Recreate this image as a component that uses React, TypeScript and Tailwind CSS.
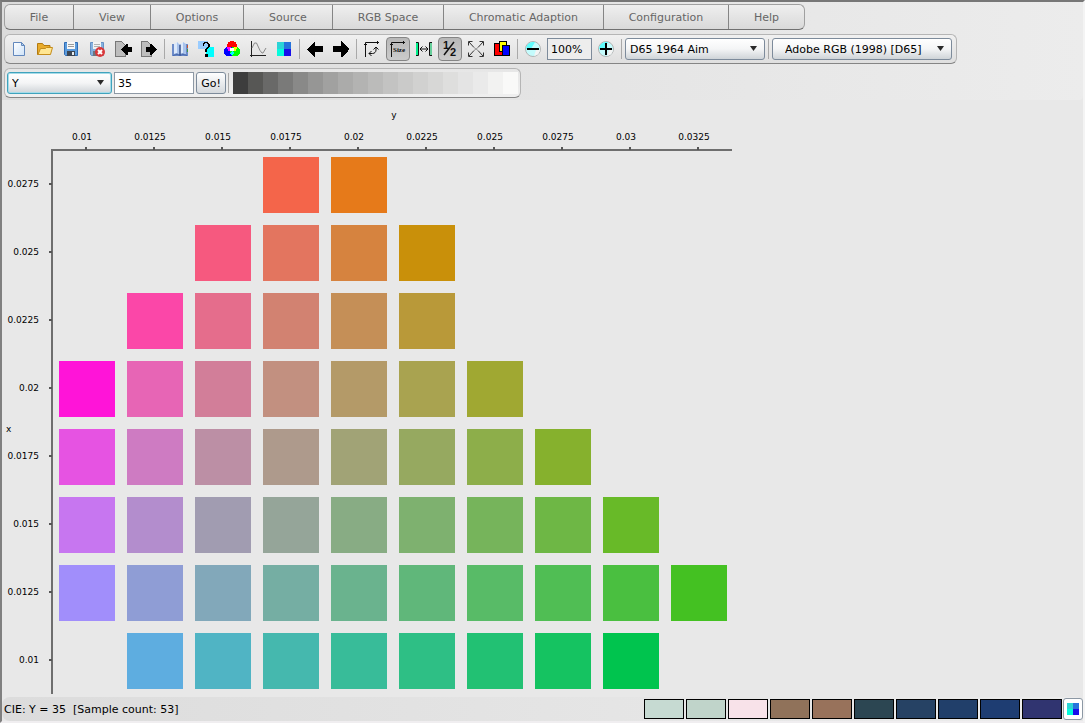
import type { ReactNode } from "react";
import clsx from "clsx";

const menus = [
  { label: "File", width: "w-[69px]" },
  { label: "View", width: "w-[77px]" },
  { label: "Options", width: "w-[93px]" },
  { label: "Source", width: "w-[89px]" },
  { label: "RGB Space", width: "w-[111px]" },
  { label: "Chromatic Adaption", width: "w-[160px]" },
  { label: "Configuration", width: "w-[125px]" },
  { label: "Help", width: "w-[75px]" },
];

const greys = [
  "#3d3d3d", "#575755", "#696968", "#7a7a79", "#898988", "#969695", "#a1a1a0",
  "#ababaa", "#b3b3b2", "#bbbbba", "#c3c3c2", "#cacac9", "#d1d1d0", "#d7d7d6",
  "#dededd", "#e4e4e4", "#eaeaea", "#f2f2f1", "#f9f9f8",
];

const recent = [
  "#c6dad2", "#c0d4ca", "#f8e2e9", "#90725a", "#98725b",
  "#2c4652", "#264264", "#213f6a", "#1e3d72", "#303470",
];

const yValues = ["0.01", "0.0125", "0.015", "0.0175", "0.02", "0.0225", "0.025", "0.0275", "0.03", "0.0325"];

// one row per x value, start = first filled column
const rows = [
  { x: "0.0275", start: 3, colors: ["#f4654a", "#e67a1a"] },
  { x: "0.025", start: 2, colors: ["#f6597f", "#e3755f", "#d6833f", "#c9900a"] },
  { x: "0.0225", start: 1, colors: ["#fb47a8", "#e56d8c", "#d28271", "#c58f57", "#b99939"] },
  { x: "0.02", start: 0, colors: ["#ff14d8", "#e765b5", "#d27e99", "#c29080", "#b49a68", "#a9a350", "#a0a832"] },
  { x: "0.0175", start: 0, colors: ["#e653e2", "#ce7bc2", "#bc8fa5", "#ae9a8c", "#a1a376", "#96a960", "#8dae4a", "#86b12d"] },
  { x: "0.015", start: 0, colors: ["#c776f0", "#b38dcd", "#a19cb1", "#95a599", "#88ac84", "#7eb16f", "#76b45b", "#6eb745", "#68ba28"] },
  { x: "0.0125", start: 0, colors: ["#a18efb", "#8f9dd5", "#82a8ba", "#75aea3", "#6ab38e", "#60b77a", "#58bb67", "#50be54", "#4abf40", "#44c122"] },
  { x: "0.01", start: 1, colors: ["#5eade0", "#50b4c4", "#45b8ae", "#38bc99", "#2ebf85", "#22c173", "#15c361", "#00c44e"] },
];

const CELL = 56;
const PITCH = 68;

function Icon({ children, crisp }: { children: ReactNode; crisp?: boolean }) {
  return (
    <svg
      width="16"
      height="16"
      viewBox="0 0 16 16"
      fill="none"
      aria-hidden="true"
      className="shrink-0 overflow-visible"
      shapeRendering={crisp ? "crispEdges" : undefined}
    >
      {children}
    </svg>
  );
}

function Quad() {
  return (
    <>
      <path fill="#2bd3d6" d="M1 1h7v7H1z" />
      <path fill="#2573dc" d="M8 1h7v7H8z" />
      <path fill="#06fbdc" d="M1 8h7v7H1z" />
      <path fill="#1910ea" d="M8 8h7v7H8z" />
    </>
  );
}

function Floppy() {
  return (
    <>
      <path fill="#5b9bdc" stroke="#2f6bb5" d="M1.500 1.500h13v13h-12l-1-1z" />
      <path fill="#f7f7f7" d="M4 1h8v7H4z" />
      <path stroke="#9a9a9a" d="M5 3.500h6M5 5.500h6" />
      <path fill="#3d4652" d="M4 10h8v5H4z" />
      <path fill="#e8edf2" d="M9 11h2v3H9z" />
    </>
  );
}

function ArrowLeft() {
  return <path fill="#000" d="M0 8l1-1 1-1 1-1 1-1 1-1 1-1 2-2v5h8v6H8v5H7l-1-1-1-1-1-1-1-1-1-1-1-1z" />;
}

const fileIcons = [
  {
    name: "New",
    icon: (
      <Icon>
        <defs>
          <linearGradient id="page" x1="0" y1="0" x2="1" y2="1">
            <stop stopColor="#fff" />
            <stop offset="1" stopColor="#cfe3f8" />
          </linearGradient>
        </defs>
        <path fill="url(#page)" stroke="#6288bd" d="M2.500 1.500h8l3 3v10h-11z" />
        <path fill="#b8d2ee" stroke="#6288bd" d="M10.500 1.500v3h3z" />
      </Icon>
    ),
  },
  {
    name: "Open",
    icon: (
      <Icon>
        <path fill="#e9ac2c" stroke="#b37a10" d="M.5 13.500v-11h5l1.500 2h6v9z" />
        <path fill="#ffe692" stroke="#c58d1c" d="M1 13.500l2.500-6h5l1-1h6l-2 7z" />
      </Icon>
    ),
  },
  { name: "Save", icon: <Icon><Floppy /></Icon> },
  {
    name: "Delete",
    icon: (
      <Icon>
        <g opacity=".7"><Floppy /></g>
        <circle cx="11" cy="11" r="5" fill="#d9383b" />
        <path stroke="#fff" strokeWidth="2" d="M9 9l4 4M13 9l-4 4" />
      </Icon>
    ),
  },
  {
    name: "Import",
    icon: (
      <Icon crisp>
        <path fill="#bdbdbd" stroke="#777" d="M.5.5h6l4 4v11H.5z" />
        <path fill="#000" d="M6 8h1V7h1V6h1V5h1V4h1V3h2v3h4v5h-4v3h-2v-1h-1v-1H9v-1H8v-1H7V9H6z" />
      </Icon>
    ),
  },
  {
    name: "Export",
    icon: (
      <Icon crisp>
        <path fill="#bdbdbd" stroke="#777" d="M.5.500h6l4 4v11H.5z" />
        <path fill="#000" d="M16 8h-1V7h-1V6h-1V5h-1V4h-1V3H9v3H5v5h4v3h2v-1h1v-1h1v-1h1v-1h1V9h1z" />
      </Icon>
    ),
  },
];

const viewIcons = [
  {
    name: "Book",
    icon: (
      <Icon>
        <path fill="#6d8cc9" d="M0 3h16v12H0z" />
        <path fill="#dce9fb" d="M2 3l3-2 3 3v9l-3-1-3 1zM14 3l-3-2-3 3v9l3-1 3 1z" />
        <path fill="#a9c3ec" d="M5 1l3 3v9l-3-1zM11 1l3 2v10l-3-1z" />
        <path stroke="#36508c" strokeWidth="1.500" d="M8 4v11" />
        <path stroke="#4869ad" d="M1 14.500l4-1 3 1 3-1 4 1" />
        <path stroke="#c5552f" d="M15.500 4v3" />
        <path stroke="#3f9a44" d="M15.500 8v3" />
      </Icon>
    ),
  },
  {
    name: "Help",
    icon: (
      <Icon crisp>
        <path fill="#99ccff" d="M0 0h10v8H0z" />
        <path fill="#00ffff" d="M8 6h8v10H8z" />
        <path fill="#000" d="M6 1h4v1H6zM5 2h2v1H5zM9 2h2v1H9zM5 3h1v2H5zM10 3h2v3h-2zM9 6h2v1H9zM8 7h2v1H8zM7 8h2v3H7zM7 13h3v3H7z" />
      </Icon>
    ),
  },
  {
    name: "Gamut",
    icon: (
      <Icon crisp>
        <circle cx="8" cy="5" r="5" fill="#ff0000" />
        <circle cx="5" cy="10.500" r="5" fill="#0000ff" />
        <circle cx="11" cy="10.500" r="5" fill="#00ff00" />
        <path fill="#ff00ff" d="M3 6h3l2 2-2 2H4z" />
        <path fill="#ffff00" d="M10 6h3l-1 4h-2L8 8z" />
        <path fill="#00ffff" d="M8 10l2 2-2 3-2-3z" />
        <circle cx="8" cy="8.500" r="2" fill="#fff" />
      </Icon>
    ),
  },
  {
    name: "Curve",
    icon: (
      <Icon>
        <path stroke="#222" d="M1.500 0v16M0 14.500h16" />
        <path stroke="#8a8a8a" d="M2 7l2.500-5h2L10 9.500l2 2.500h1l3-5" />
      </Icon>
    ),
  },
  { name: "Patches", icon: <Icon crisp><Quad /></Icon> },
];

const navIcons = [
  { name: "Back", icon: <Icon crisp><ArrowLeft /></Icon> },
  { name: "Forward", icon: <Icon crisp><g transform="matrix(-1 0 0 1 16 0)"><ArrowLeft /></g></Icon> },
];

const scaleIcons = [
  {
    name: "Swap axes",
    icon: (
      <Icon>
        <path stroke="#111" d="M1.500 16V1.500H15M0 3.500h3M13.500 0v3" />
        <path stroke="#111" d="M5 12.500h3.500c2 0 3.500-1.500 3.500-3.500V6M9.500 8.500L12 6l2.500 2.500M7.500 10L5 12.500 7.500 15" />
      </Icon>
    ),
  },
  {
    name: "Size",
    pressed: true,
    icon: (
      <Icon>
        <path stroke="#111" d="M1.500 16V1.500H15M0 3.500h3M13.500 0v3" />
        <text x="3" y="11" fontSize="7" fontWeight="bold" fontFamily="Liberation Serif, serif" fill="#111">
          Size
        </text>
      </Icon>
    ),
  },
  {
    name: "Spacing",
    icon: (
      <Icon>
        <path fill="#00f28c" d="M0 1h2v14H0z" />
        <path fill="#67cf9b" d="M14 1h2v14h-2z" />
        <path stroke="#111" d="M0 1.500h2.500v13H0M16 1.500h-2.500v13H16M4.500 8h7M6.500 5.500L4 8l2.500 2.500M9.500 5.500L12 8l-2.500 2.500" />
      </Icon>
    ),
  },
  {
    name: "Half size",
    pressed: true,
    icon: (
      <Icon>
        <g fontSize="11" fontWeight="bold" fontFamily="Liberation Sans, sans-serif" fill="#111">
          <text x="1" y="8">1</text>
          <text x="8" y="15">2</text>
        </g>
        <path stroke="#111" strokeWidth="1.500" d="M2 14L12 1" />
      </Icon>
    ),
  },
  {
    name: "Fit",
    icon: (
      <Icon>
        <path stroke="#333" d="M1 1l5 5.500M15 1l-5 5.500M1 15l5-5.500M15 15l-5-5.500" />
        <path stroke="#333" d="M.5 4.500v-4h4M11.500.5h4v4M.5 11.500v4h4M15.500 11.500v4h-4" />
        <path stroke="#999" d="M6 6.500l4 3M10 6.500l-4 3" />
      </Icon>
    ),
  },
  {
    name: "Layers",
    icon: (
      <Icon crisp>
        <path fill="#ff0000" stroke="#000" d="M.5 2.500h8v12h-8z" />
        <path fill="#ffff00" stroke="#000" d="M5.500.5h7v10h-7z" />
        <path fill="#0000ff" stroke="#000" d="M8.500 4.500h7v10h-7z" />
      </Icon>
    ),
  },
];

const disc = (
  <>
    <circle cx="8" cy="8" r="7.500" fill="#c4fbfc" stroke="#b4b4b4" />
    <path fill="#5ffcfd" d="M1 8a7 7 0 0 1 7-7h2L6 8z" />
    <path fill="#f4f4f4" d="M15 9a7 7 0 0 1-6 6l2-6z" />
  </>
);

function ToolButton({ name, icon, pressed }: { name: string; icon: ReactNode; pressed?: boolean }) {
  return (
    <button
      type="button"
      title={name}
      aria-label={name}
      aria-pressed={pressed}
      className={clsx(
        "mx-px flex size-6 shrink-0 items-center justify-center",
        pressed && "rounded-sm border border-[#858585] bg-linear-to-b from-[#b8b8b8] to-[#cbcbcb]"
      )}
    >
      {icon}
    </button>
  );
}

function Separator() {
  return <div className="mx-0.5 h-5 w-px shrink-0 bg-[#a9a9a9]" />;
}

function Select({ label, options, className, active, indent }: { label: string; options: string[]; className: string; active?: boolean; indent?: boolean }) {
  return (
    <div className={clsx("relative shrink-0", className)}>
      <select
        aria-label={label}
        className={clsx(
          "h-[22px] w-full appearance-none rounded-[3px] border bg-linear-to-b from-white via-[#f4f5f6] to-[#cfd4d8] pt-0.5",
          active ? "border-[#3fa3bd] ring-1 ring-[#a6dbe8] ring-inset" : "border-[#7d8b9b]",
          indent ? "pl-3" : "pl-1"
        )}
      >
        {options.map((o) => (
          <option key={o}>{o}</option>
        ))}
      </select>
      <svg className="pointer-events-none absolute top-2 right-2 h-[5px] w-[7px]" viewBox="0 0 7 5" aria-hidden="true">
        <path fill="#2a2a2a" d="M0 0h7L3.500 5z" />
      </svg>
    </div>
  );
}

function Chart() {
  return (
    <svg width="738" height="597" className="block" fontSize="9" shapeRendering="crispEdges" role="img" aria-label="CIE samples">
      <text x="392" y="18" textAnchor="middle">y</text>
      <text x="4" y="332">x</text>
      <path fill="#6e6e6e" d="M49 49h681v2H49zM49 49h2v545h-2z" />
      {yValues.map((v, i) => (
        <g key={v}>
          <text x={80 + i * PITCH} y="40" textAnchor="middle">{v}</text>
          <rect x={83 + i * PITCH} y="47" width="2" height="3" fill="#555" />
        </g>
      ))}
      {rows.map((row, r) => (
        <g key={row.x}>
          <text x="37" y={87 + r * PITCH} textAnchor="end">{row.x}</text>
          <rect x="47" y={83 + r * PITCH} width="3" height="2" fill="#555" />
          {row.colors.map((c, i) => (
            <rect key={c} x={57 + (row.start + i) * PITCH} y={57 + r * PITCH} width={CELL} height={CELL} fill={c} />
          ))}
        </g>
      ))}
    </svg>
  );
}

export default function App() {
  return (
    <div className="flex min-h-screen flex-col border-t-2 border-r-2 border-b-2 border-l-2 border-t-[#777] border-r-[#f4f4f4] border-b-[#f0eef0] border-l-[#808080] bg-[#e8e8e8] font-['Verdana','DejaVu_Sans',sans-serif] text-[11px] text-black">
      <header className="flex flex-col items-start rounded-r bg-linear-to-r from-[#dcdcdc] to-[#ececec] px-0.5 pt-0.5 pb-0.5">
        <nav className="flex h-[26px] overflow-hidden rounded-md border border-[#a0a0a0] border-b-[#707070] bg-linear-to-b from-[#efefef] to-[#d9d9d9]">
          {menus.map((m) => (
            <button
              key={m.label}
              type="button"
              className={clsx("border-r border-[#858585] pt-0.5 text-[#666] last:border-r-0", m.width)}
            >
              {m.label}
            </button>
          ))}
        </nav>

        <div className="mt-1 flex h-[30px] items-center rounded-md border border-[#b5b5b5] border-b-[#858585] bg-linear-to-b from-[#f0f0f0] to-[#dfdfdf] pr-1 pl-px">
          {fileIcons.map((b) => <ToolButton key={b.name} {...b} />)}
          <Separator />
          {viewIcons.map((b) => <ToolButton key={b.name} {...b} />)}
          <Separator />
          {navIcons.map((b) => <ToolButton key={b.name} {...b} />)}
          <Separator />
          {scaleIcons.map((b) => <ToolButton key={b.name} {...b} />)}
          <Separator />
          <ToolButton name="Zoom out" icon={<Icon>{disc}<path fill="#000" d="M2 7h12v2H2z" /></Icon>} />
          <input
            aria-label="Zoom"
            defaultValue="100%"
            className="mx-px h-[22px] w-[45px] border border-[#7d8b9b] bg-[#ededed] px-[3px]"
          />
          <ToolButton name="Zoom in" icon={<Icon>{disc}<path fill="#000" d="M2 7h5V2h2v5h5v2H9v5H7V9H2z" /></Icon>} />
          <Separator />
          <Select label="Illuminant" options={["D65 1964 Aim"]} className="mx-px w-[140px]" />
          <Separator />
          <Select label="RGB space" options={["Adobe RGB (1998) [D65]"]} className="ml-px w-[180px]" indent />
        </div>

        <div className="mt-1 flex h-[30px] items-center rounded-md border border-[#b5b5b5] border-b-[#858585] bg-linear-to-b from-[#e6e6e6] to-[#efefef] px-0.5">
          <Select label="Plane" options={["Y"]} className="w-[105px]" active />
          <input
            aria-label="Value"
            defaultValue="35"
            className="ml-0.5 h-[22px] w-[80px] border border-[#8e99a5] bg-white px-[3px]"
          />
          <button
            type="button"
            className="ml-0.5 h-[22px] w-[30px] rounded-[3px] border border-[#7d8b9b] bg-linear-to-b from-white to-[#d5d9dd] pt-0.5"
          >
            Go!
          </button>
          <Separator />
          <div className="ml-0.5 flex">
            {greys.map((g) => (
              <div key={g} className="h-[22px] w-[15px]" style={{ backgroundColor: g }} />
            ))}
          </div>
        </div>
      </header>

      <main className="flex-1">
        <Chart />
      </main>

      <footer className="flex h-6 items-center rounded-lg bg-linear-to-r from-[#dcdcdc] to-[#ececec] pl-0.5">
        <p className="flex-1 pt-0.5 whitespace-pre">CIE: Y = 35  [Sample count: 53]</p>
        <div className="flex gap-0.5">
          {recent.map((c) => (
            <div key={c} className="h-5 w-10 border border-black" style={{ backgroundColor: c }} />
          ))}
        </div>
        <button
          type="button"
          aria-label="Patches"
          className="ml-px flex h-[22px] w-5 items-center justify-center rounded-[3px] border border-[#8c98a4] bg-white"
        >
          <svg width="14" height="14" viewBox="0 0 16 16" shapeRendering="crispEdges" aria-hidden="true">
            <Quad />
          </svg>
        </button>
      </footer>
    </div>
  );
}
